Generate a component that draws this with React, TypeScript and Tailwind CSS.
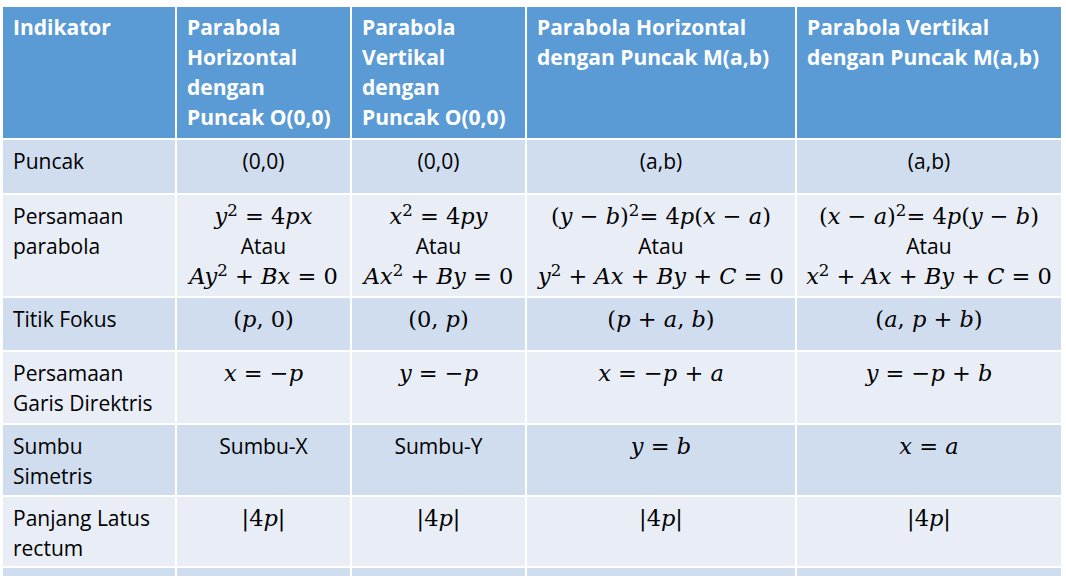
import React from "react";

function M({ s }: { s: string }) {
  const out: React.ReactNode[] = [];
  let i = 0;
  let k = 0;
  while (i < s.length) {
    const c = s[i];
    if (c === "^" && s[i + 1] === "2") {
      out.push(
        <span key={k++} className="align-[0.48em] text-[0.74em] leading-[0] not-italic">
          2
        </span>
      );
      i += 2;
      continue;
    }
    if (/[a-zA-Z]/.test(c)) {
      out.push(
        <span key={k++} className="italic">
          {c}
        </span>
      );
    } else {
      out.push(<span key={k++}>{c}</span>);
    }
    i++;
  }
  return (
    <span className="whitespace-pre font-['DejaVu_Serif',serif] text-[22.5px]">{out}</span>
  );
}

type Cell = React.ReactNode;

const bodyFont =
  "font-['Open_Sans',sans-serif] text-[21px] leading-[30px] [font-variant-ligatures:none]";

const rows: { label: React.ReactNode; cells: Cell[]; h: string; dark: boolean }[] = [
  {
    label: "Puncak",
    cells: ["(0,0)", "(0,0)", "(a,b)", "(a,b)"],
    h: "h-[53px]",
    dark: true,
  },
  {
    label: (
      <>
        Persamaan
        <br />
        parabola
      </>
    ),
    cells: [
      <>
        <M s="y^2 = 4px" />
        <br />
        Atau
        <br />
        <M s="Ay^2 + Bx = 0" />
      </>,
      <>
        <M s="x^2 = 4py" />
        <br />
        Atau
        <br />
        <M s="Ax^2 + By = 0" />
      </>,
      <>
        <M s="(y − b)^2= 4p(x − a)" />
        <br />
        Atau
        <br />
        <M s="y^2 + Ax + By + C = 0" />
      </>,
      <>
        <M s="(x − a)^2= 4p(y − b)" />
        <br />
        Atau
        <br />
        <M s="x^2 + Ax + By + C = 0" />
      </>,
    ],
    h: "h-[101px]",
    dark: false,
  },
  {
    label: "Titik Fokus",
    cells: [<M s="(p, 0)" />, <M s="(0, p)" />, <M s="(p + a, b)" />, <M s="(a, p + b)" />],
    h: "h-[52px]",
    dark: true,
  },
  {
    label: (
      <>
        Persamaan
        <br />
        Garis Direktris
      </>
    ),
    cells: [<M s="x = −p" />, <M s="y = −p" />, <M s="x = −p + a" />, <M s="y = −p + b" />],
    h: "h-[71px]",
    dark: false,
  },
  {
    label: (
      <>
        Sumbu
        <br />
        Simetris
      </>
    ),
    cells: ["Sumbu-X", "Sumbu-Y", <M s="y = b" />, <M s="x = a" />],
    h: "h-[70px]",
    dark: true,
  },
  {
    label: (
      <>
        Panjang Latus
        <br />
        rectum
      </>
    ),
    cells: [<M s="|4p|" />, <M s="|4p|" />, <M s="|4p|" />, <M s="|4p|" />],
    h: "h-[69px]",
    dark: false,
  },
];

const headers: React.ReactNode[] = [
  "Indikator",
  <>
    Parabola
    <br />
    Horizontal
    <br />
    dengan
    <br />
    Puncak O(0,0)
  </>,
  <>
    Parabola
    <br />
    Vertikal
    <br />
    dengan
    <br />
    Puncak O(0,0)
  </>,
  <>
    Parabola Horizontal
    <br />
    dengan Puncak M(a,b)
  </>,
  <>
    Parabola Vertikal
    <br />
    dengan Puncak M(a,b)
  </>,
];

export default function App() {
  return (
    <div className="w-[1066px] h-[576px] overflow-hidden bg-white pt-[7px] pl-[3px]">
      <div className="grid w-[1058px] grid-cols-[172px_173px_173px_268px_264px] gap-[2px] bg-white">
        {headers.map((h, i) => (
          <div
            key={i}
            className={`h-[131px] bg-[#5B9BD5] pl-[10px] pr-[2px] pt-[5px] text-white ${bodyFont} text-[20px] font-bold whitespace-nowrap`}
          >
            {h}
          </div>
        ))}
        {rows.map((r, ri) => (
          <React.Fragment key={ri}>
            <div
              className={`${r.h} ${r.dark ? "bg-[#D0DDEE]" : "bg-[#E9EEF6]"} px-[10px] pt-[6px] text-black ${bodyFont} whitespace-nowrap`}
            >
              {r.label}
            </div>
            {r.cells.map((c, ci) => (
              <div
                key={ci}
                className={`${r.h} ${r.dark ? "bg-[#D0DDEE]" : "bg-[#E9EEF6]"} pt-[6px] text-center text-black ${bodyFont} whitespace-nowrap`}
              >
                {c}
              </div>
            ))}
          </React.Fragment>
        ))}
        {[0, 1, 2, 3, 4].map((i) => (
          <div key={i} className="h-[40px] bg-[#D0DDEE]" />
        ))}
      </div>
    </div>
  );
}
